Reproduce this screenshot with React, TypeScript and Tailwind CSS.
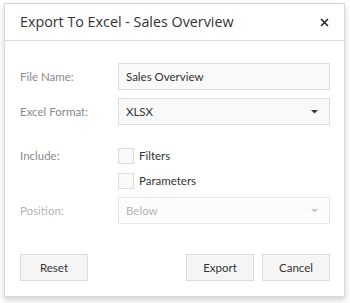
import React, { useState } from "react";

const titleFont = { fontFamily: '"Open Sans", "Noto Sans", sans-serif' };
const bodyFont = { fontFamily: 'Lato, "Open Sans", sans-serif' };

const Caret = ({ light }: { light?: boolean }) => (
  <svg width="7" height="4" viewBox="0 0 7 4" className={light ? "text-[#c4c4c4]" : "text-[#333]"}>
    <path d="M0 0h7L3.5 3.5z" fill="currentColor" />
  </svg>
);

const Row = ({ label, disabled, children }: { label: string; disabled?: boolean; children: React.ReactNode }) => (
  <div className="flex items-center">
    <div className={`w-[98px] text-[11.5px] ${disabled ? "text-[#b5b5b5]" : "text-[#8a8a8a]"}`}>{label}</div>
    <div className="flex-1">{children}</div>
  </div>
);

export default function App() {
  const [filters, setFilters] = useState(false);
  const [params, setParams] = useState(false);

  return (
    <div className="w-[350px] h-[303px] bg-white pt-[3px] pl-[4px]" style={bodyFont}>
      <div className="w-[341px] h-[294px] bg-white border border-[#d9d9d9] shadow-[0_3px_6px_rgba(0,0,0,0.18)] flex flex-col">
        <div className="h-[37px] flex items-center justify-between pl-[15px] pr-[15px] border-b border-[#dcdcdc]">
          <span className="text-[14.3px] text-[#333]" style={titleFont}>Export To Excel - Sales Overview</span>
          <svg width="9" height="9" viewBox="0 0 9 9">
            <path d="M1 1l7 7M8 1l-7 7" stroke="#222" strokeWidth="1.5" />
          </svg>
        </div>

        <div className="flex-1 flex flex-col pl-[15px] pr-[14px] pt-[22px]">
          <div className="flex flex-col gap-[8px]">
            <Row label="File Name:">
              <div className="h-[27px] border border-[#dcdcdc] bg-[#f9f9f9] flex items-center px-[7px] text-[11.5px] text-[#333]">
                Sales Overview
              </div>
            </Row>
            <Row label="Excel Format:">
              <div className="h-[27px] border border-[#dcdcdc] bg-[#f9f9f9] flex items-center justify-between pl-[7px] pr-[11px] text-[11.5px] text-[#333]">
                XLSX
                <Caret />
              </div>
            </Row>
          </div>

          <div className="mt-[23px] flex items-start">
            <div className="w-[98px] text-[11.5px] text-[#8a8a8a] leading-[16px]">Include:</div>
            <div className="flex flex-col gap-[9px]">
              <label className="flex items-center gap-[5px] h-[16px] leading-[16px] text-[11.5px] text-[#333] cursor-pointer" onClick={() => setFilters(!filters)}>
                <span className="w-[16px] h-[16px] border border-[#dcdcdc] bg-[#f9f9f9] flex items-center justify-center text-[10px]">{filters ? "✓" : ""}</span>
                Filters
              </label>
              <label className="flex items-center gap-[5px] h-[16px] leading-[16px] text-[11.5px] text-[#333] cursor-pointer" onClick={() => setParams(!params)}>
                <span className="w-[16px] h-[16px] border border-[#dcdcdc] bg-[#f9f9f9] flex items-center justify-center text-[10px]">{params ? "✓" : ""}</span>
                Parameters
              </label>
            </div>
          </div>

          <div className="mt-[8px]">
            <Row label="Position:" disabled>
              <div className="h-[27px] border border-[#e6e6e6] bg-[#fcfcfc] flex items-center justify-between pl-[7px] pr-[11px] text-[11.5px] text-[#b5b5b5]">
                Below
                <Caret light />
              </div>
            </Row>
          </div>

          <div className="mt-auto mb-[15px] flex items-center">
            <button className="w-[68px] h-[27px] border border-[#dcdcdc] bg-[#f5f5f5] text-[11.5px] text-[#333]">Reset</button>
            <div className="flex-1" />
            <button className="w-[68px] h-[27px] border border-[#dcdcdc] bg-[#f5f5f5] text-[11.5px] text-[#333]">Export</button>
            <button className="ml-[8px] w-[68px] h-[27px] border border-[#dcdcdc] bg-[#f5f5f5] text-[11.5px] text-[#333]">Cancel</button>
          </div>
        </div>
      </div>
    </div>
  );
}
